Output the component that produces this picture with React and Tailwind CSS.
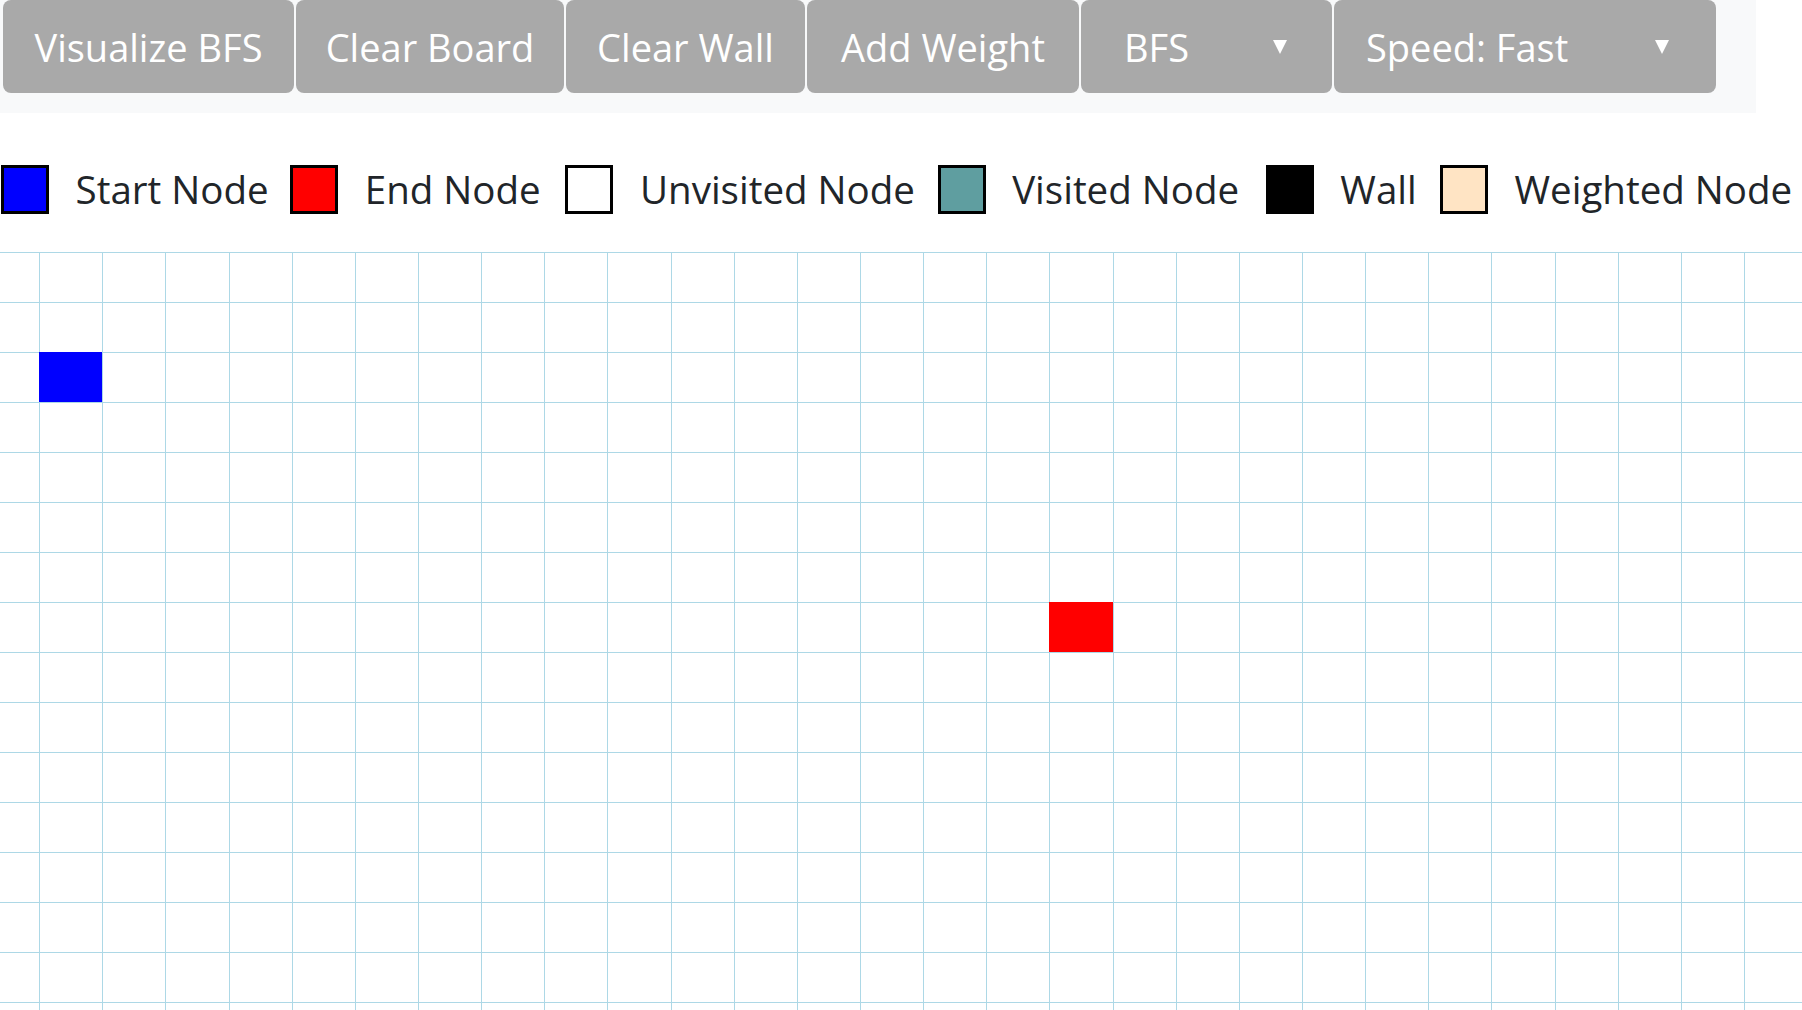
import React from "react";

const ROWS = 16;
const COLS = 30;

function Caret() {
  return (
    <svg width="14" height="14" viewBox="0 0 14 14" className="shrink-0">
      <polygon points="0,0 14,0 7,14" fill="#ffffff" />
    </svg>
  );
}

function NavButton({ children, className }) {
  return (
    <div
      className={
        "h-[93px] rounded-[8px] bg-[#a9a9a9] text-white text-[38px] leading-[60px] flex items-center " +
        className
      }
    >
      {children}
    </div>
  );
}

const legend = [
  { label: "Start Node", box: "bg-[#0000ff] border-black", w: "w-[188px]" },
  { label: "End Node", box: "bg-[#ff0000] border-black", w: "w-[174px]" },
  { label: "Unvisited Node", box: "bg-white border-black", w: "w-[271px]" },
  { label: "Visited Node", box: "bg-[#5f9ea0] border-black", w: "w-[227px]" },
  { label: "Wall", box: "bg-black border-black", w: "w-[73px]" },
  { label: "Weighted Node", box: "bg-[#ffe4c4] border-black", w: "w-[278px]" },
];

function Cell({ r, c }) {
  let cls = "border-l border-t border-[#add8e6] bg-white";
  if (r === 2 && c === 1) cls = "border-l border-t border-[#0000ff] bg-[#0000ff]";
  if (r === 7 && c === 17) cls = "border-l border-t border-[#ff0000] bg-[#ff0000]";
  return <div className={cls} />;
}

export default function App() {
  const cells = [];
  for (let r = 0; r < ROWS; r++) {
    for (let c = 0; c < COLS; c++) {
      cells.push(<Cell key={r + "-" + c} r={r} c={c} />);
    }
  }
  return (
    <div
      className="h-screen w-screen overflow-hidden bg-white"
      style={{ fontFamily: '"Open Sans", "Noto Sans", sans-serif' }}
    >
      <nav className="w-[1756px] h-[113px] bg-[#f8f9fa] flex items-start gap-[2px] pl-[3px]">
        <NavButton className="w-[291px] justify-center">Visualize BFS</NavButton>
        <NavButton className="w-[268px] justify-center">Clear Board</NavButton>
        <NavButton className="w-[239px] justify-center">Clear Wall</NavButton>
        <NavButton className="w-[272px] justify-center">Add Weight</NavButton>
        <NavButton className="w-[251px] justify-between pl-[43px] pr-[45px]">
          <span>BFS</span>
          <Caret />
        </NavButton>
        <NavButton className="w-[382px] justify-between pl-[32px] pr-[47px]">
          <span>Speed: Fast</span>
          <Caret />
        </NavButton>
      </nav>

      <div className="mt-[46px] h-[60px] flex items-center gap-[26.6px] pl-[1px] text-[38.5px] leading-[60px] text-[#212529]">
        {legend.map((item) => (
          <React.Fragment key={item.label}>
            <div className={"w-[48px] h-[49px] border-[3px] shrink-0 " + item.box} />
            <span className={"whitespace-nowrap shrink-0 " + item.w}>{item.label}</span>
          </React.Fragment>
        ))}
      </div>

      <div className="mt-[33px] w-full overflow-hidden">
        <div className="ml-[-24px] grid grid-cols-[repeat(30,63.15px)] grid-rows-[repeat(16,50px)] w-max">
          {cells}
        </div>
      </div>
    </div>
  );
}
